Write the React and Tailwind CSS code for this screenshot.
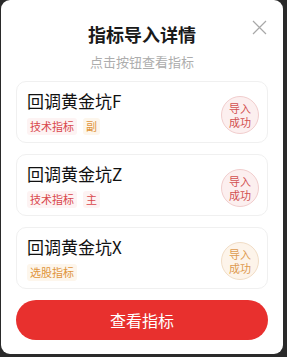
import React from 'react';

const items = [
  { name: '回调黄金坑F', tags: [{ label: '技术指标', tone: 'red' }, { label: '副', tone: 'orange' }], tone: 'red' },
  { name: '回调黄金坑Z', tags: [{ label: '技术指标', tone: 'red' }, { label: '主', tone: 'red' }], tone: 'red' },
  { name: '回调黄金坑X', tags: [{ label: '选股指标', tone: 'orange' }], tone: 'orange' },
];

const Tag = ({ label, tone }) => (
  <span
    className={`px-[3px] h-[17px] leading-[17px] rounded-[3px] text-[11px] ${
      tone === 'red' ? 'bg-[#fdf3f3] text-[#d9474b]' : 'bg-[#fdf6ec] text-[#e0943a]'
    }`}
  >
    {label}
  </span>
);

const Badge = ({ tone }) => (
  <div
    className={`w-[38px] h-[38px] rounded-full border flex items-center justify-center text-center text-[11px] leading-[14px] ${
      tone === 'red'
        ? 'bg-[#fcefef] border-[#f1cdcd] text-[#d2504f]'
        : 'bg-[#fdf4ea] border-[#f1ddc6] text-[#de9a4f]'
    }`}
  >
    <p>
      导入
      <br />
      成功
    </p>
  </div>
);

export default function App() {
  return (
    <div
      className="w-[287px] h-[357px] bg-[#2a2a2a] pl-[1px] pr-[4px] pb-[3px] overflow-hidden"
      style={{ fontFamily: '"Noto Sans CJK SC", "Noto Sans", sans-serif' }}
    >
      <div className="h-full bg-white rounded-[9px] flex flex-col px-[15px]">
        {/* Header */}
        <div className="relative pt-[22px] text-center">
          <div className="text-[18px] leading-[24px] font-bold text-[#1a1a1a]">指标导入详情</div>
          <div className="mt-[7px] text-[13px] leading-[17px] text-[#adadad]">点击按钮查看指标</div>
          <svg className="absolute right-[1px] top-[20px]" width="15" height="15" viewBox="0 0 15 15">
            <path d="M1 1L14 14M14 1L1 14" stroke="#a8a8a8" strokeWidth="1.2" fill="none" />
          </svg>
        </div>

        {/* Cards */}
        <div className="mt-[11px] flex flex-col gap-[11px]">
          {items.map((it) => (
            <div
              key={it.name}
              className="h-[62px] border border-[#f0f0f0] rounded-[10px] flex items-center justify-between pl-[10px] pr-[8px]"
            >
              <div className="flex flex-col gap-[6px]">
                <div className="text-[17px] leading-[22px] text-[#111]">{it.name}</div>
                <div className="flex gap-[6px]">
                  {it.tags.map((t) => (
                    <Tag key={t.label} {...t} />
                  ))}
                </div>
              </div>
              <div className="mt-[6px]">
                <Badge tone={it.tone} />
              </div>
            </div>
          ))}
        </div>

        {/* Button */}
        <button className="mt-[11px] h-[40px] w-full rounded-full bg-[#e8302e] text-white text-[16px]">
          查看指标
        </button>
      </div>
    </div>
  );
}
